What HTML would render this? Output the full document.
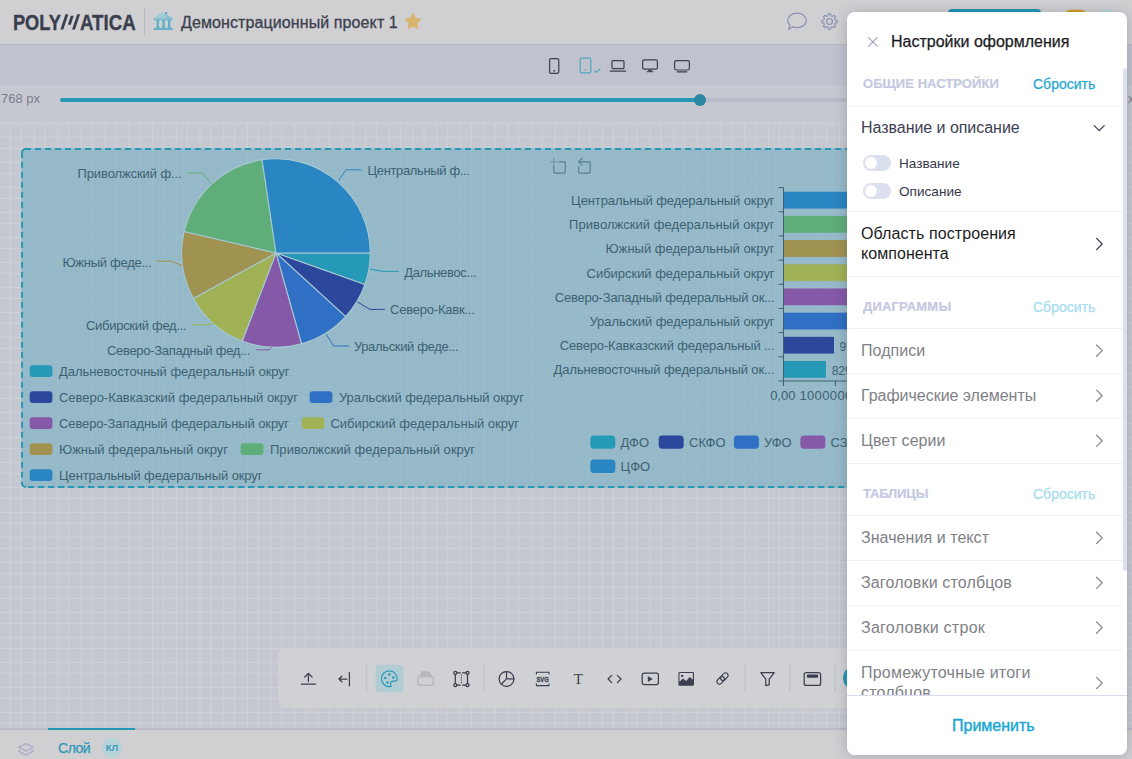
<!DOCTYPE html>
<html lang="ru"><head><meta charset="utf-8"><title>Polymatica</title>
<style>
*{box-sizing:border-box;margin:0;padding:0}
html,body{width:1132px;height:759px;overflow:hidden;background:#c6c8d1;font-family:"Liberation Sans",sans-serif;}
.abs{position:absolute}
#root{position:relative;width:1132px;height:759px;overflow:hidden}
#header{left:0;top:0;width:1132px;height:45px;background:#d0d0d3;border-bottom:1px solid #b6b9c7}
#devbar{left:0;top:45px;width:1132px;height:40px;background:#c0c3ce}
#sliderrow{left:0;top:85px;width:1132px;height:38px;background:#c7c9d2}
#canvas{left:0;top:123px;width:1132px;height:607px;background:#c6c8d1}
#footer{left:0;top:728px;width:1132px;height:31px;background:#d0d0d3;border-top:2px solid #b9bbc9}
.title{left:181px;top:13px;font-size:16px;line-height:20px;color:#3b3f4e;white-space:nowrap;letter-spacing:0.1px;-webkit-text-stroke:0.3px #3b3f4e}
svg{display:block;overflow:visible}
text{font-family:"Liberation Sans",sans-serif}
</style></head><body><div id="root">
<div id="canvas" class="abs">
<svg class="abs" style="left:0;top:0" width="1132" height="607">
<defs>
<pattern id="cells" x="11.050" y="0.950" width="23.684" height="25" patternUnits="userSpaceOnUse">
<rect x="0" y="0" width="9.800" height="12.900" fill="#c6c8d1"/>
<rect x="10.9" y="0" width="11.684" height="12.900" fill="#c6c8d1"/>
<rect x="0" y="14" width="9.800" height="9.900" fill="#c6c8d1"/>
<rect x="10.9" y="14" width="11.684" height="9.900" fill="#c6c8d1"/>
</pattern>
</defs>
<rect width="1132" height="607" fill="#d0d1d7"/>
<rect width="1132" height="607" fill="url(#cells)"/>
</svg>
</div>
<div id="header" class="abs">
<svg class="abs" style="left:0;top:0" width="440" height="45">
<g fill="#3a3e4d" stroke="#3a3e4d" stroke-width="0.35" font-weight="700" font-size="21.5">
<text transform="translate(12.9,29.6) scale(0.85,1)">POLY</text>
<text transform="translate(80,29.6) scale(0.87,1)">ATICA</text>
</g>
<g fill="#3a3e4d">
<path d="M60.4 29.6L65.5 14.2H68.4L63.3 29.6Z"/>
<path d="M67.9 24.8L70.8 15.7H73.7L70.8 24.8Z"/>
<path d="M72.1 29.6L77.2 14.2H80.1L75 29.6Z"/>
</g>
<rect x="144" y="8" width="1" height="28" fill="#b6bac7"/>
<!-- bank icon -->
<g>
<path d="M153.2 18.6L162.2 12.2L173 18.6Z" fill="#a5ccd8"/>
<path d="M165 12h2.2v3.2L165 13.8Z" fill="#56adc4"/>
<path d="M162.2 12.2L173 18.6H167Z" fill="#8cc0d0"/>
<rect x="153.2" y="18.2" width="19.8" height="1.7" fill="#7dbccd"/>
<g fill="#5fb0c6">
<rect x="156.6" y="20" width="2.3" height="8.2"/>
<rect x="162.3" y="20" width="2.3" height="8.2"/>
<rect x="168" y="20" width="2.3" height="8.2"/>
<rect x="155.8" y="19.9" width="3.9" height="1.2"/>
<rect x="161.5" y="19.9" width="3.9" height="1.2"/>
<rect x="167.2" y="19.9" width="3.9" height="1.2"/>
<rect x="155.8" y="27" width="3.9" height="1.2"/>
<rect x="161.5" y="27" width="3.9" height="1.2"/>
<rect x="167.2" y="27" width="3.9" height="1.2"/>
<rect x="153.6" y="28.2" width="19" height="1.8"/>
</g>
</g>
<!-- star -->
<path d="M413 13.2l2.45 5.2 5.6 0.75-4.1 3.95 1 5.65-4.95-2.75-4.95 2.75 1-5.65-4.1-3.95 5.6-0.75z" fill="#d9b46e" stroke="#d9b46e" stroke-width="1" stroke-linejoin="round"/>
</svg>
<div class="abs title">Демонстрационный проект 1</div>
<svg class="abs" style="left:780px;top:0" width="352" height="45">
<g fill="none" stroke="#8e93b3" stroke-width="1.3" stroke-linejoin="round" stroke-linecap="round">
<path d="M17 13.2c5.3 0 9.3 3.2 9.3 7.2s-4 7.2-9.3 7.2c-1.5 0-2.9-0.25-4.1-0.7l-4.3 2.3 1.3-4.2c-1.4-1.25-2.2-2.85-2.2-4.6 0-4 4-7.2 9.3-7.2z"/>
</g>
<g fill="none" stroke="#8e93b3" stroke-width="1.2" stroke-linejoin="round">
<circle cx="49.5" cy="21.5" r="2.9"/>
<path d="M55.23 20.08L57.11 20.36L57.11 22.64L55.23 22.92L54.55 24.54L55.69 26.07L54.07 27.69L52.54 26.55L50.92 27.23L50.64 29.11L48.36 29.11L48.08 27.23L46.46 26.55L44.93 27.69L43.31 26.07L44.45 24.54L43.77 22.92L41.89 22.64L41.89 20.36L43.77 20.08L44.45 18.46L43.31 16.93L44.93 15.31L46.46 16.45L48.08 15.77L48.36 13.89L50.64 13.89L50.92 15.77L52.54 16.45L54.07 15.31L55.69 16.93L54.55 18.46Z"/>
</g>
<rect x="168" y="9" width="93" height="28" rx="4" fill="#2596b4"/>
<rect x="284.4" y="9.8" width="22.6" height="26" rx="6" fill="#d59a27"/>
<circle cx="327" cy="22" r="12.5" fill="#b9d6df"/>
</svg>
</div>
<div id="devbar" class="abs">
<svg class="abs" style="left:530px;top:0" width="200" height="40">
<g fill="none" stroke="#3b3f4e" stroke-width="1.2" stroke-linejoin="round" stroke-linecap="round">
<rect x="19.6" y="13.6" width="9.2" height="14.8" rx="1.6"/>
<rect x="50.2" y="13.2" width="10.6" height="14.6" rx="1.4" stroke="#4fa6c2"/>
<path d="M64.6 25.6l1.8 1.8 3.6-3.6" stroke="#4fa6c2"/>
<rect x="82" y="15.6" width="12" height="8" rx="1"/>
<path d="M80.4 26.2h15.2"/>
<rect x="112.6" y="14.8" width="14.8" height="9.4" rx="1.6"/>
<rect x="144.6" y="15.6" width="14.8" height="9.4" rx="1.8"/>
<path d="M147.2 26.9h9.6"/>
</g>
<rect x="23.4" y="25" width="1.6" height="1.6" fill="#3b3f4e"/>
<path d="M54.7 25.2h1.6M55.5 24.4v1.6" stroke="#4fa6c2" stroke-width="0.8"/>
<path d="M118.6 24.4h2.8l0.6 2.2h-4z" fill="#3b3f4e"/>
<rect x="116.6" y="26.2" width="6.8" height="1" fill="#3b3f4e"/>
</svg>
</div>
<div id="sliderrow" class="abs">
<div class="abs" style="left:1px;top:6px;font-size:13px;line-height:16px;color:#7b7e8c;white-space:nowrap">768 px</div>
<div class="abs" style="left:1128px;top:6px;font-size:13px;line-height:16px;color:#7b7e8c;white-space:nowrap">x</div>
<div class="abs" style="left:60px;top:13px;width:1012px;height:4px;border-radius:2px;background:#b8bbc8"></div>
<div class="abs" style="left:60px;top:13px;width:640px;height:4px;border-radius:2px;background:#2698b6"></div>
<div class="abs" style="left:694px;top:9px;width:12px;height:12px;border-radius:6px;background:#2a87a3"></div>
</div>
<div id="footer" class="abs">
<div class="abs" style="left:48px;top:-2px;width:87px;height:2px;background:#2698b6"></div>
<svg class="abs" style="left:14px;top:9px" width="24" height="22">
<g fill="none" stroke="#a6a9c6" stroke-width="1.2" stroke-linejoin="round">
<path d="M12 4.6l7.4 3.7-7.4 3.7-7.4-3.7z"/>
<path d="M6.6 11.2L4.6 12.2l7.4 3.7 7.4-3.7-2-1"/>
</g>
</svg>
<div class="abs" style="left:58px;top:9px;font-size:14px;line-height:18px;color:#2b97b6;white-space:nowrap;letter-spacing:-0.45px;-webkit-text-stroke:0.25px #2b97b6">Слой</div>
<div class="abs" style="left:102px;top:7.5px;width:20px;height:20px;border-radius:10px;background:#b7d4dd;color:#3a9bb8;font-size:9.6px;font-weight:700;line-height:20.5px;text-align:center">КЛ</div>
</div>
<svg class="abs" style="left:0;top:0" width="1132" height="759">
<rect x="21" y="148" width="1092" height="340" rx="5" fill="#64aabf" fill-opacity="0.5"/>
<g fill="none" stroke="#2698b6" stroke-width="2"><path d="M25 149H1108" stroke-dasharray="6 4"/><path d="M28 487H1108" stroke-dasharray="6.3 3.7"/><path d="M22 152V480" stroke-dasharray="5.8 4.2"/><path d="M1112 152V480" stroke-dasharray="5.8 4.2"/><path d="M22 153A4 4 0 0 1 26 149M22 482V483A4 4 0 0 0 26 487M1108 149A4 4 0 0 1 1112 153M1112 483A4 4 0 0 1 1108 487"/></g>
<path d="M276 253L370.30 253.00A94.3 94.3 0 0 1 364.89 284.48Z" fill="#2699b6" stroke="#a6c8d3" stroke-width="1.1" stroke-linejoin="round"/>
<path d="M276 253L364.89 284.48A94.3 94.3 0 0 1 345.64 316.59Z" fill="#2c489c" stroke="#a6c8d3" stroke-width="1.1" stroke-linejoin="round"/>
<path d="M276 253L345.64 316.59A94.3 94.3 0 0 1 301.52 343.78Z" fill="#3070c4" stroke="#a6c8d3" stroke-width="1.1" stroke-linejoin="round"/>
<path d="M276 253L301.52 343.78A94.3 94.3 0 0 1 242.21 341.04Z" fill="#8559a8" stroke="#a6c8d3" stroke-width="1.1" stroke-linejoin="round"/>
<path d="M276 253L242.21 341.04A94.3 94.3 0 0 1 193.36 298.43Z" fill="#a0b255" stroke="#a6c8d3" stroke-width="1.1" stroke-linejoin="round"/>
<path d="M276 253L193.36 298.43A94.3 94.3 0 0 1 184.19 231.47Z" fill="#a09250" stroke="#a6c8d3" stroke-width="1.1" stroke-linejoin="round"/>
<path d="M276 253L184.19 231.47A94.3 94.3 0 0 1 262.06 159.74Z" fill="#5fad79" stroke="#a6c8d3" stroke-width="1.1" stroke-linejoin="round"/>
<path d="M276 253L262.06 159.74A94.3 94.3 0 0 1 370.30 253.00Z" fill="#2a86c2" stroke="#a6c8d3" stroke-width="1.1" stroke-linejoin="round"/>
<path d="M338.7 180.6L346 169.8L361.5 169.8" fill="none" stroke="#2a86c2" stroke-width="1"/>
<text x="367.5" y="175.1" font-size="13" fill="#3e6173" text-anchor="start" textLength="102.5">Центральный ф...</text>
<path d="M369.6 269L383 271.4L399 271.4" fill="none" stroke="#2699b6" stroke-width="1"/>
<text x="404.2" y="276.9" font-size="13" fill="#3e6173" text-anchor="start" textLength="72.5">Дальневос...</text>
<path d="M357.4 301.8L369.8 309.4L384.8 309.4" fill="none" stroke="#2c489c" stroke-width="1"/>
<text x="390.1" y="314.1" font-size="13" fill="#3e6173" text-anchor="start" textLength="84.8">Северо-Кавк...</text>
<path d="M326.1 334L333.6 346L348.6 346" fill="none" stroke="#3070c4" stroke-width="1"/>
<text x="353.9" y="351.1" font-size="13" fill="#3e6173" text-anchor="start" textLength="104.6">Уральский феде...</text>
<path d="M271.5 347.5L269.4 349.8L256 349.8" fill="none" stroke="#8559a8" stroke-width="1"/>
<text x="250.3" y="354.7" font-size="13" fill="#3e6173" text-anchor="end" textLength="143.3">Северо-Западный фед...</text>
<path d="M213.6 323.6L205.8 324.8L192 324.8" fill="none" stroke="#a0b255" stroke-width="1"/>
<text x="186.7" y="329.9" font-size="13" fill="#3e6173" text-anchor="end" textLength="100.7">Сибирский фед...</text>
<path d="M182 265.6L170.8 261.2L157 261.2" fill="none" stroke="#a09250" stroke-width="1"/>
<text x="151.8" y="266.9" font-size="13" fill="#3e6173" text-anchor="end" textLength="89.3">Южный феде...</text>
<path d="M211.5 184.2L202.6 173L187.5 173" fill="none" stroke="#5fad79" stroke-width="1"/>
<text x="181.7" y="178.1" font-size="13" fill="#3e6173" text-anchor="end" textLength="104.2">Приволжский ф...</text>
<rect x="29.7" y="365.2" width="22.7" height="11.8" rx="3" fill="#2699b6"/>
<text x="59" y="375.7" font-size="13" fill="#3e6173" text-anchor="start" textLength="230.5">Дальневосточный федеральный округ</text>
<rect x="29.7" y="391.2" width="22.7" height="11.8" rx="3" fill="#2c489c"/>
<text x="59" y="401.7" font-size="13" fill="#3e6173" text-anchor="start" textLength="239">Северо-Кавказский федеральный округ</text>
<rect x="309.7" y="391.2" width="22.7" height="11.8" rx="3" fill="#3070c4"/>
<text x="339" y="401.7" font-size="13" fill="#3e6173" text-anchor="start" textLength="185">Уральский федеральный округ</text>
<rect x="29.7" y="417.2" width="22.7" height="11.8" rx="3" fill="#8559a8"/>
<text x="59" y="427.7" font-size="13" fill="#3e6173" text-anchor="start" textLength="230">Северо-Западный федеральный округ</text>
<rect x="301.7" y="417.2" width="22.7" height="11.8" rx="3" fill="#a0b255"/>
<text x="330.5" y="427.7" font-size="13" fill="#3e6173" text-anchor="start" textLength="188.5">Сибирский федеральный округ</text>
<rect x="29.7" y="443.2" width="22.7" height="11.8" rx="3" fill="#a09250"/>
<text x="59" y="453.7" font-size="13" fill="#3e6173" text-anchor="start" textLength="169">Южный федеральный округ</text>
<rect x="240.7" y="443.2" width="22.7" height="11.8" rx="3" fill="#5fad79"/>
<text x="270" y="453.7" font-size="13" fill="#3e6173" text-anchor="start" textLength="205">Приволжский федеральный округ</text>
<rect x="29.7" y="469.2" width="22.7" height="11.8" rx="3" fill="#2a86c2"/>
<text x="59" y="479.7" font-size="13" fill="#3e6173" text-anchor="start" textLength="203.5">Центральный федеральный округ</text>
<g fill="none" stroke="#557f90" stroke-width="1.15" stroke-linecap="round" stroke-linejoin="round"><path d="M553.9 166v6.2q0 0.9 0.9 0.9h9.6q0.9 0 0.9-0.9v-9.4q0-0.9-0.9-0.9h-5.4"/><path d="M553.9 158v8M550.3 161.9h7" stroke-opacity="0.55"/><path d="M578.7 166.6v5.6q0 0.9 0.9 0.9h9.7q0.9 0 0.9-0.9v-9.4q0-0.9-0.9-0.9h-10.6M582 158.2l-3.4 3.7 3.4 3.3"/></g>
<rect x="783.5" y="191.78" width="316.5" height="16.8" fill="#2a86c2"/>
<text x="774.6" y="205.1" font-size="13" fill="#3e6173" text-anchor="end" textLength="203.5">Центральный федеральный округ</text>
<rect x="783.5" y="215.95" width="316.5" height="16.8" fill="#5fad79"/>
<text x="774.6" y="229.3" font-size="13" fill="#3e6173" text-anchor="end" textLength="205.5">Приволжский федеральный округ</text>
<rect x="783.5" y="240.12" width="316.5" height="16.8" fill="#a09250"/>
<text x="774.6" y="253.4" font-size="13" fill="#3e6173" text-anchor="end" textLength="169">Южный федеральный округ</text>
<rect x="783.5" y="264.30" width="316.5" height="16.8" fill="#a0b255"/>
<text x="774.6" y="277.6" font-size="13" fill="#3e6173" text-anchor="end" textLength="188">Сибирский федеральный округ</text>
<rect x="783.5" y="288.47" width="316.5" height="16.8" fill="#8559a8"/>
<text x="774.6" y="301.8" font-size="13" fill="#3e6173" text-anchor="end" textLength="219.9">Северо-Западный федеральный ок...</text>
<rect x="783.5" y="312.63" width="316.5" height="16.8" fill="#3070c4"/>
<text x="774.6" y="325.9" font-size="13" fill="#3e6173" text-anchor="end" textLength="185.1">Уральский федеральный округ</text>
<rect x="783.5" y="336.81" width="50.5" height="16.8" fill="#2c489c"/>
<text x="774.6" y="350.1" font-size="13" fill="#3e6173" text-anchor="end" textLength="214.8">Северо-Кавказский федеральный ...</text>
<rect x="783.5" y="360.98" width="42.5" height="16.8" fill="#2699b6"/>
<text x="774.6" y="374.3" font-size="13" fill="#3e6173" text-anchor="end" textLength="221">Дальневосточный федеральный ок...</text>
<text x="839.6" y="350.9" font-size="12" fill="#3e6173" text-anchor="start">970</text>
<text x="831.7" y="375.0" font-size="12" fill="#3e6173" text-anchor="start">829</text>
<path d="M783.5 187.6V381H1100M778.5 187.60H783.5M778.5 211.77H783.5M778.5 235.94H783.5M778.5 260.11H783.5M778.5 284.28H783.5M778.5 308.45H783.5M778.5 332.62H783.5M778.5 356.79H783.5M778.5 380.96H783.5M783.5 381v5M835.4 381v5" fill="none" stroke="#3f6273" stroke-width="1"/>
<text x="782.8" y="399.7" font-size="13" fill="#3e6173" text-anchor="middle">0,00</text>
<text x="835.4" y="399.7" font-size="13" fill="#3e6173" text-anchor="middle" textLength="72">1000000,00</text>
<rect x="590.3" y="435.40000000000003" width="25" height="13.4" rx="3.5" fill="#2699b6"/>
<text x="620.6" y="447.1" font-size="13" fill="#3e6173" text-anchor="start">ДФО</text>
<rect x="658.7" y="435.40000000000003" width="25" height="13.4" rx="3.5" fill="#2c489c"/>
<text x="689" y="447.1" font-size="13" fill="#3e6173" text-anchor="start">СКФО</text>
<rect x="733.9" y="435.40000000000003" width="25" height="13.4" rx="3.5" fill="#3070c4"/>
<text x="763.9" y="447.1" font-size="13" fill="#3e6173" text-anchor="start">УФО</text>
<rect x="800.4" y="435.40000000000003" width="25" height="13.4" rx="3.5" fill="#8559a8"/>
<text x="830.6" y="447.1" font-size="13" fill="#3e6173" text-anchor="start">СЗФО</text>
<rect x="590.3" y="459.6" width="25" height="13.4" rx="3.5" fill="#2a86c2"/>
<text x="620.6" y="471.3" font-size="13" fill="#3e6173" text-anchor="start">ЦФО</text>
</svg>
<svg class="abs" style="left:0;top:0" width="1132" height="759">
<rect x="278" y="649" width="640" height="59" rx="8" fill="#d0d1d4"/>
<rect x="365.75" y="664" width="1.5" height="28" fill="#c1c3cf"/>
<rect x="483.25" y="664" width="1.5" height="28" fill="#c1c3cf"/>
<rect x="744.25" y="664" width="1.5" height="28" fill="#c1c3cf"/>
<rect x="789.05" y="664" width="1.5" height="28" fill="#c1c3cf"/>
<rect x="834.15" y="664" width="1.5" height="28" fill="#c1c3cf"/>
<rect x="375.6" y="664.8" width="27.8" height="27.8" rx="3.5" fill="#b2ccd4"/>
<g fill="none" stroke="#3b3f4e" stroke-width="1.25" stroke-linecap="round" stroke-linejoin="round">
<path d="M301.4 684.2h14M308.4 681.4v-7.6M304.7 677l3.7-3.6 3.7 3.6"/>
<path d="M349.4 672.6v13.2M346.8 679h-7.8M341.8 676.2l-2.9 2.8 2.9 2.8"/>
<path d="M455.3 674.4v9.1M467.5 674.4v9.1M456.9 672.8h3.4M462.5 672.8h3.4M456.9 685.1h3.4M462.5 685.1h3.4"/>
<circle cx="455.3" cy="672.8" r="1.55"/><circle cx="467.5" cy="672.8" r="1.55"/><circle cx="455.3" cy="685.1" r="1.55"/><circle cx="467.5" cy="685.1" r="1.55"/>
<path d="M461.4 674.6v9" stroke-width="1" stroke-dasharray="1.3 1.1" stroke-linecap="butt"/>
<circle cx="506.5" cy="678.9" r="7.4"/><path d="M506.5 671.5v7.4h7.4M506.5 678.9l-5.2 5.3"/>
<path d="M536.4 674v-1.8h12.6v1.8M536.4 683.8v1.8h12.6v-1.8" stroke-width="1.1"/>
<path d="M611.7 675.4l-3.6 3.6 3.6 3.6M617.4 675.4l3.6 3.6-3.6 3.6"/>
<rect x="642.2" y="673.2" width="16.2" height="11.4" rx="2"/>
<g transform="translate(722.5,678.5) rotate(-45)" stroke-width="1.2"><rect x="-6.9" y="-2.5" width="8.6" height="5" rx="2.5"/><rect x="-1.7" y="-2.5" width="8.6" height="5" rx="2.5"/></g>
<path d="M760.8 672.7h13.4l-5 6.5v5.6l-3.4 0.8v-6.4z"/>
<rect x="804.2" y="672.6" width="16.4" height="12.8" rx="2"/>
</g>
<path d="M647.8 675.9l5 3-5 3z" fill="#3b3f4e"/>
<rect x="806.9" y="674.5" width="11.2" height="3.3" rx="0.8" fill="#3b3f4e"/>
<text x="536.5" y="681.8" font-size="7.8" font-weight="700" fill="#3b3f4e" stroke="#3b3f4e" stroke-width="0.3" textLength="12.2" lengthAdjust="spacingAndGlyphs">SVG</text>
<text x="578.4" y="684" font-size="15" fill="#3b3f4e" text-anchor="middle" style="font-family:'Liberation Serif',serif">T</text>
<path d="M679.6 672h13.2q1.2 0 1.2 1.2v11.4q0 1.2-1.2 1.2h-13.2q-1.2 0-1.2-1.2v-11.4q0-1.2 1.2-1.2zM679.5 673.1v8.6l3.6-3.2 3 2.6 3.6-4 3.2 2.6v-6.6z" fill="#3b3f4e" fill-rule="evenodd"/>
<circle cx="682.2" cy="676" r="1.15" fill="#3b3f4e"/>
<g fill="none" stroke="#2698b6" stroke-width="1.2" stroke-linejoin="round"><path d="M391.1 686.5A7.9 7.9 0 1 1 397.2 679.7C396.4 681.3 395 681.3 393.6 681.1C391.5 680.8 390.1 682.4 390.6 684.2Z"/></g>
<circle cx="389.4" cy="674.6" r="1.25" fill="#2698b6"/>
<circle cx="385.3" cy="678" r="1.25" fill="#2698b6"/>
<circle cx="393.3" cy="677.6" r="1.25" fill="#2698b6"/>
<circle cx="387.5" cy="682.6" r="1.25" fill="#2698b6"/>
<g fill="none" stroke="#b6b7bd" stroke-width="1.4" stroke-linejoin="round"><rect x="417.8" y="676.6" width="15.6" height="8.6" rx="2.2"/></g>
<path d="M422 671.2h7.2l3.4 5.2h-14z" fill="#b6b7bd"/>
<circle cx="855" cy="678" r="12" fill="#2698b6"/>
</svg>
<style>
#panel{left:847px;top:12px;width:280px;height:743px;background:#fff;border-radius:8px;overflow:hidden;box-shadow:0 1px 14px rgba(20,22,50,0.22)}
#panel .t{position:absolute;white-space:nowrap}
#panel .hd{font-size:13px;font-weight:700;color:#c4c8e1;line-height:16px;left:16px;-webkit-text-stroke:0.2px #c4c8e1}
#panel .rs{font-size:14px;color:#1fa7d0;line-height:18px;left:186px;-webkit-text-stroke:0.25px currentColor}
#panel .it{font-size:16px;line-height:20px;left:14px;color:#808188}
#panel .dv{position:absolute;left:0;width:276px;height:1px;background:#edeff7}
#panel .tg{position:absolute;left:16px;width:28px;height:16px;border-radius:8px;background:#dcdfee}
#panel .tg i{position:absolute;left:1.8px;top:1.8px;width:12.4px;height:12.4px;border-radius:6.2px;background:#fff}
#panel .lb{font-size:13.6px;line-height:16px;left:52px;color:#353849}
</style>
<div id="panel" class="abs">
<svg class="abs" style="left:0;top:0" width="280" height="743">
<path d="M21.6 25.6l8.6 8.6M30.2 25.6l-8.6 8.6" stroke="#9da2c4" stroke-width="1.1" fill="none" stroke-linecap="round"/>
<path d="M247.2 113.6l5 5 5-5" stroke="#3d4153" stroke-width="1.3" fill="none" stroke-linecap="round" stroke-linejoin="round"/>

<path d="M249.6 226.4l5.6 5.6-5.6 5.6" stroke="#3d4153" stroke-width="1.3" fill="none" stroke-linecap="round" stroke-linejoin="round"/>
<path d="M249.6 333.0l5.6 5.6-5.6 5.6" stroke="#8a8b93" stroke-width="1.3" fill="none" stroke-linecap="round" stroke-linejoin="round"/>
<path d="M249.6 378.1l5.6 5.6-5.6 5.6" stroke="#8a8b93" stroke-width="1.3" fill="none" stroke-linecap="round" stroke-linejoin="round"/>
<path d="M249.6 423.2l5.6 5.6-5.6 5.6" stroke="#8a8b93" stroke-width="1.3" fill="none" stroke-linecap="round" stroke-linejoin="round"/>
<path d="M249.6 520.3l5.6 5.6-5.6 5.6" stroke="#8a8b93" stroke-width="1.3" fill="none" stroke-linecap="round" stroke-linejoin="round"/>
<path d="M249.6 565.2l5.6 5.6-5.6 5.6" stroke="#8a8b93" stroke-width="1.3" fill="none" stroke-linecap="round" stroke-linejoin="round"/>
<path d="M249.6 610.0l5.6 5.6-5.6 5.6" stroke="#8a8b93" stroke-width="1.3" fill="none" stroke-linecap="round" stroke-linejoin="round"/>
<path d="M249.6 665.4l5.6 5.6-5.6 5.6" stroke="#8a8b93" stroke-width="1.3" fill="none" stroke-linecap="round" stroke-linejoin="round"/>
</svg>
<div class="t " style="top:19.5px;left:44px;font-size:16px;line-height:20px;color:#1c1c1e;-webkit-text-stroke:0.25px #1c1c1e">Настройки оформления</div>
<div class="t hd" style="top:64.0px;letter-spacing:0.05px">ОБЩИЕ НАСТРОЙКИ</div>
<div class="t rs" style="top:63.0px;">Сбросить</div>
<div class="t it" style="top:106.0px;color:#3d4153;letter-spacing:-0.04px">Название и описание</div>
<div class="t lb" style="top:144.0px;">Название</div>
<div class="t lb" style="top:172.1px;">Описание</div>
<div class="tg" style="top:143px"><i></i></div>
<div class="tg" style="top:171px"><i></i></div>
<div class="t it" style="top:211.8px;color:#1c1c1e;letter-spacing:0.09px">Область построения</div>
<div class="t it" style="top:231.8px;color:#1c1c1e;letter-spacing:0.05px">компонента</div>
<div class="t hd" style="top:287.0px;letter-spacing:0.18px">ДИАГРАММЫ</div>
<div class="t rs" style="top:286.0px;color:#a6dcee">Сбросить</div>
<div class="t it" style="top:328.6px;letter-spacing:0.04px">Подписи</div>
<div class="t it" style="top:373.7px;letter-spacing:-0.03px">Графические элементы</div>
<div class="t it" style="top:418.8px;letter-spacing:0.06px">Цвет серии</div>
<div class="t hd" style="top:474.0px;letter-spacing:-0.14px">ТАБЛИЦЫ</div>
<div class="t rs" style="top:473.0px;color:#a6dcee">Сбросить</div>
<div class="t it" style="top:515.9px;letter-spacing:0.06px">Значения и текст</div>
<div class="t it" style="top:560.8px;letter-spacing:0.14px">Заголовки столбцов</div>
<div class="t it" style="top:605.6px;letter-spacing:0.27px">Заголовки строк</div>
<div class="t it" style="top:651.0px;letter-spacing:0.22px">Промежуточные итоги</div>
<div class="t it" style="top:671.0px;letter-spacing:0.17px">столбцов</div>
<div class="dv" style="top:93.5px"></div>
<div class="dv" style="top:198.8px"></div>
<div class="dv" style="top:263.5px"></div>
<div class="dv" style="top:316.1px"></div>
<div class="dv" style="top:360.8px"></div>
<div class="dv" style="top:405.5px"></div>
<div class="dv" style="top:450.5px"></div>
<div class="dv" style="top:502.7px"></div>
<div class="dv" style="top:547.7px"></div>
<div class="dv" style="top:592.9px"></div>
<div class="dv" style="top:637.9px"></div>
<div class="abs" style="left:0;top:682.5px;width:280px;height:61px;background:#fff;border-top:1px solid #d9dcf0"></div>
<div class="t " style="top:704.0px;left:105px;font-size:16px;line-height:20px;color:#17a6d3;-webkit-text-stroke:0.4px #17a6d3">Применить</div>
<div class="abs" style="left:276.4px;top:56px;width:3.6px;height:502.5px;border-radius:2px;background:#dcdfee"></div>
</div>
</div></body></html>
